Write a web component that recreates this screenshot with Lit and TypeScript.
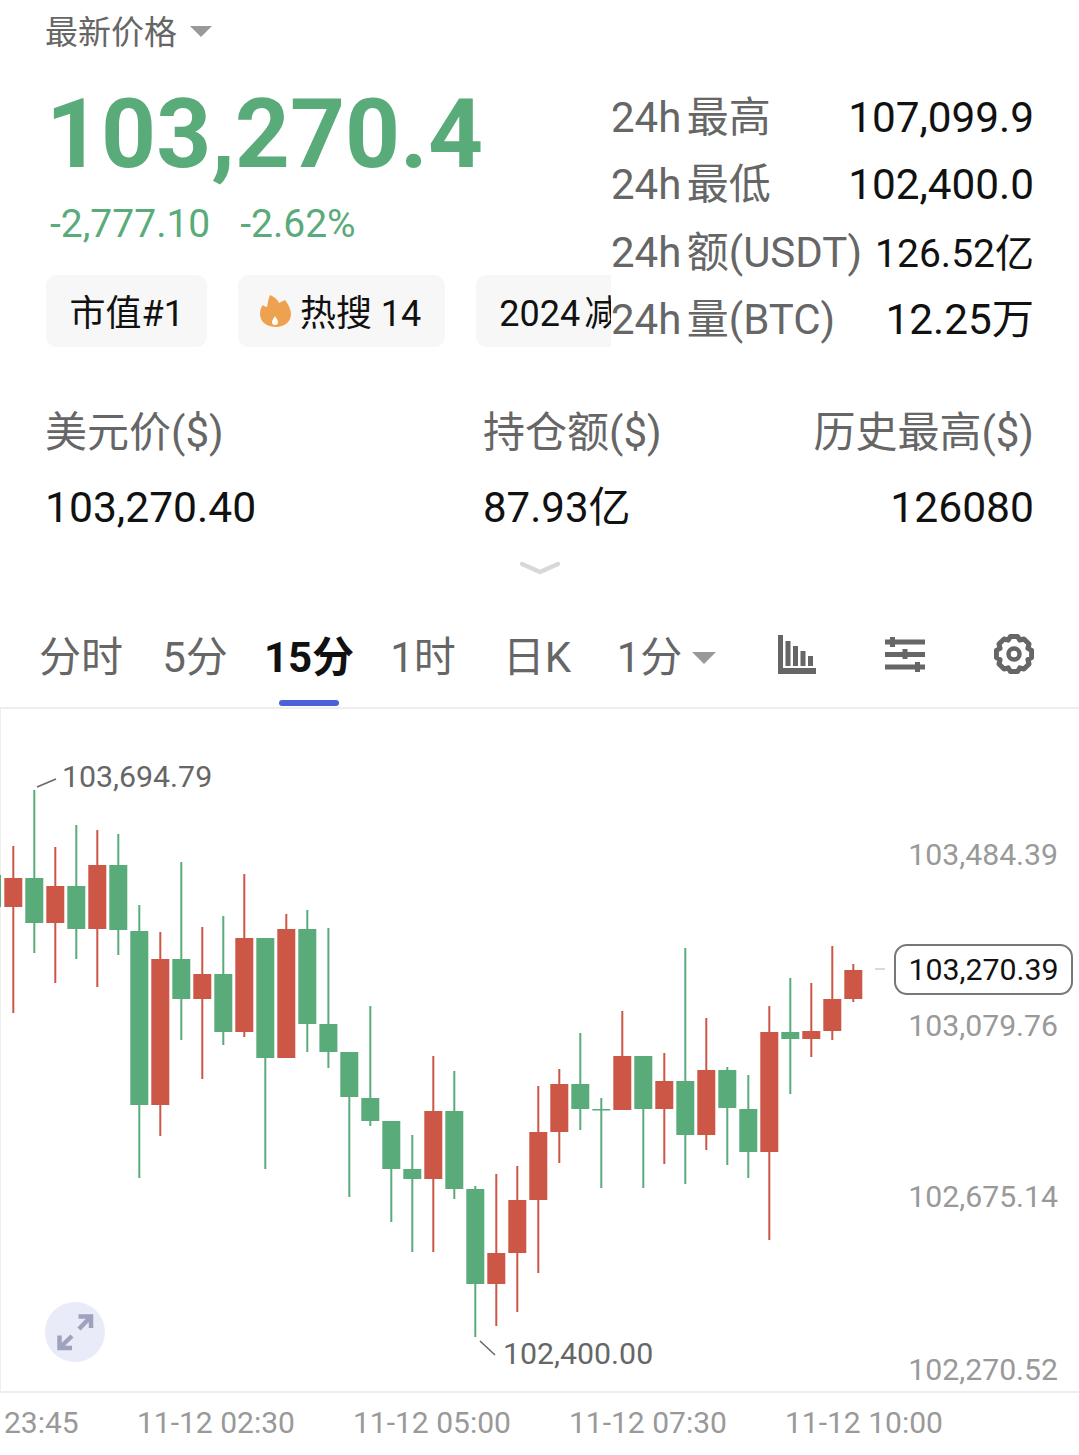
import { LitElement, html, svg, css } from 'lit';
import { customElement } from 'lit/decorators.js';

// x, wick top, wick bottom, body top, body bottom, up(red)
type Candle = [number, number, number, number, number, boolean];

const CANDLES: Candle[] = [
  [-8, 875, 907, 875, 907, false],
  [13.3, 846, 1013, 878, 907, true],
  [34.3, 790, 953, 878, 923, false],
  [55.3, 847, 983, 886, 923, true],
  [76.3, 825, 959, 886, 929, false],
  [97.3, 830, 987, 865, 929, true],
  [118.3, 834, 955, 865, 930, false],
  [139.3, 905, 1178, 931, 1105, false],
  [160.3, 932, 1136, 959, 1105, true],
  [181.3, 862, 1040, 959, 999, false],
  [202.3, 927, 1079, 974, 999, true],
  [223.3, 916, 1045, 974, 1032, false],
  [244.3, 874, 1037, 938, 1032, true],
  [265.3, 938, 1169, 938, 1058, false],
  [286.3, 914, 1058, 929, 1058, true],
  [307.3, 910, 1052, 929, 1024, false],
  [328.4, 928, 1068, 1024, 1052, false],
  [349.3, 1052, 1197, 1052, 1097, false],
  [370.3, 1006, 1126, 1098, 1121, false],
  [391.3, 1121, 1222, 1121, 1169, false],
  [412.3, 1135, 1252, 1169, 1179, false],
  [433.3, 1056, 1252, 1111, 1179, true],
  [454.3, 1071, 1199, 1111, 1189, false],
  [475.3, 1186, 1337, 1189, 1284, false],
  [496.3, 1174, 1326, 1253, 1284, true],
  [517.3, 1166, 1312, 1200, 1253, true],
  [538.3, 1086, 1273, 1132, 1200, true],
  [559.3, 1069, 1163, 1084, 1132, true],
  [580.3, 1033, 1130, 1084, 1109, false],
  [601.3, 1098, 1188, 1109, 1110, false],
  [622.3, 1011, 1110, 1056, 1110, true],
  [643.3, 1056, 1188, 1056, 1109, false],
  [664.3, 1053, 1164, 1081, 1109, true],
  [685.3, 948, 1184, 1081, 1135, false],
  [706.3, 1018, 1150, 1070, 1135, true],
  [727.3, 1067, 1165, 1070, 1108, false],
  [748.3, 1075, 1178, 1109, 1152, false],
  [769.3, 1006, 1240, 1032, 1152, true],
  [790.3, 978, 1094, 1032, 1039, false],
  [811.3, 983, 1057, 1031, 1039, true],
  [832.3, 946, 1040, 999, 1031, true],
  [853.3, 964, 1002, 970, 999, true],
];

const CHART_TOP = 709;

const AXIS = [
  { text: '103,484.39', y: 855 },
  { text: '103,079.76', y: 1026 },
  { text: '102,675.14', y: 1197 },
  { text: '102,270.52', y: 1370 },
];

// eight rounded lobes round the centre, two points on each lobe and one in the notch
function gearPath(cx: number, cy: number, outer: number, inner: number) {
  const pts: string[] = [];
  for (let i = 0; i < 8; i++) {
    const a = (i * Math.PI) / 4 - Math.PI / 2;
    for (const [da, r] of [[-0.2, outer], [0.2, outer], [Math.PI / 8, inner]]) {
      pts.push(`${(cx + r * Math.cos(a + da)).toFixed(1)} ${(cy + r * Math.sin(a + da)).toFixed(1)}`);
    }
  }
  return `M${pts.join('L')}z`;
}

@customElement('app-root')
export class AppRoot extends LitElement {
  static styles = css`
    :host {
      display: block;
      width: 1079px;
      height: 1455px;
      overflow: hidden;
      background: #fff;
      font-family: Roboto, "Noto Sans CJK SC", sans-serif;
      color: #111;
    }

    .top {
      display: flex;
      height: 375px;
    }

    .left {
      flex: none;
      width: 611px;
      padding-left: 45px;
      box-sizing: border-box;
      overflow: hidden;
    }

    .title {
      display: flex;
      align-items: center;
      height: 62px;
      margin-top: -1px;
      font-size: 33px;
      color: #666;
    }

    .tri {
      width: 0;
      height: 0;
      border-left: 11px solid transparent;
      border-right: 11px solid transparent;
      border-top: 11px solid #999;
    }

    .title .tri {
      margin-left: 13px;
      margin-top: 3px;
    }

    .price {
      margin: 25px 0 0 1px;
      font-size: 96px;
      line-height: 96px;
      font-weight: 700;
      color: #5aab7a;
      white-space: nowrap;
    }

    .change {
      display: flex;
      gap: 30px;
      margin: 17px 0 0 5px;
      font-size: 39px;
      line-height: 50px;
      color: #5aab7a;
    }

    .chips {
      display: flex;
      gap: 31px;
      margin: 26px 0 0 1px;
      width: 700px;
    }

    .chip {
      display: flex;
      align-items: center;
      gap: 8px;
      box-sizing: border-box;
      height: 72px;
      padding: 6px 23.5px 0 23.5px;
      border-radius: 11px;
      background: #f7f7f7;
      font-size: 36px;
      line-height: 66px;
      white-space: nowrap;
      flex: none;
    }

    .chip.fire {
      padding: 6px 23.5px 0 21.5px;
    }

    .chip.fire svg {
      margin-top: -6px;
    }

    .chip.halving {
      word-spacing: -5px;
    }

    .right {
      flex: 1;
      padding: 84px 45px 0 0;
    }

    .stat {
      display: flex;
      justify-content: space-between;
      align-items: baseline;
      height: 67.4px;
      line-height: 67.4px;
      font-size: 42px;
      white-space: nowrap;
    }

    .stat span:first-child {
      color: #666;
      word-spacing: -5px;
    }

    .stat span:last-child {
      font-size: 42.3px;
    }

    .stat span.fit:last-child {
      font-size: 39px;
    }

    .metrics {
      display: grid;
      grid-template-columns: 438px 1fr auto;
      padding: 20px 45px 0;
      height: 128px;
      font-size: 42px;
      line-height: 75px;
      white-space: nowrap;
    }

    .metrics .label {
      color: #666;
    }

    .metrics .end {
      text-align: right;
    }

    .metrics .num {
      font-size: 42.6px;
    }

    .more {
      display: flex;
      justify-content: center;
      align-items: flex-start;
      height: 46px;
      padding-top: 38px;
    }

    .tabs {
      display: flex;
      align-items: center;
      height: 100px;
      padding-left: 24px;
      border-bottom: 2px solid #eee;
    }

    .tab {
      position: relative;
      width: 114px;
      flex: none;
      padding-top: 2px;
      line-height: 98px;
      text-align: center;
      font-size: 42px;
      color: #666;
      white-space: nowrap;
    }

    .tab.active {
      color: #111;
      font-weight: 700;
    }

    .tab.active::after {
      content: "";
      position: absolute;
      left: 27px;
      bottom: 1px;
      width: 60px;
      height: 6px;
      border-radius: 3px;
      background: #4a62d8;
    }

    .tab.drop {
      box-sizing: border-box;
      padding-right: 3px;
    }

    .tab .tri {
      position: absolute;
      left: 98px;
      top: 45px;
      border-left-width: 12px;
      border-right-width: 12px;
      border-top-width: 12px;
    }

    .tools {
      display: flex;
      margin: 0 0 6px 35px;
    }

    .tool {
      display: flex;
      justify-content: center;
      align-items: center;
      box-sizing: border-box;
      width: 108px;
    }

    .tool.cog {
      padding-left: 2px;
    }

    .chart {
      position: relative;
      height: 682px;
      border-left: 1px solid #eee;
      border-bottom: 2px solid #eee;
    }

    .chart > svg {
      position: absolute;
      left: -1px;
      top: 0;
    }

    .axis {
      position: absolute;
      right: 21px;
      font-size: 30.2px;
      line-height: 36px;
      color: #999;
      transform: translateY(-50%);
    }

    .extreme {
      position: absolute;
      font-size: 30.3px;
      line-height: 36px;
      color: #666;
      transform: translateY(-50%);
    }

    .last {
      position: absolute;
      left: 893px;
      top: 235px;
      width: 179px;
      height: 51px;
      box-sizing: border-box;
      border: 2px solid #777;
      border-radius: 13px;
      background: #fff;
      font-size: 30.3px;
      line-height: 47px;
      text-align: center;
      color: #111;
    }

    .expand {
      position: absolute;
      left: 44px;
      top: 593px;
      width: 60px;
      height: 60px;
      border-radius: 50%;
      background: #e9ebf9;
    }

    .times {
      display: flex;
      padding-left: 4px;
      font-size: 30px;
      line-height: 60px;
      color: #999;
      white-space: nowrap;
    }

    .times span {
      width: 216px;
      flex: none;
    }

    .times span:first-child {
      width: 133px;
    }
  `;

  private renderCandles() {
    return CANDLES.map(([x, top, bottom, bodyTop, bodyBottom, up]) => {
      const color = up ? '#cc5746' : '#5aab7a';
      return svg`
        <rect x=${x - 1} y=${top} width="2" height=${bottom - top} fill=${color}></rect>
        <rect x=${x - 9} y=${bodyTop} width="18" height=${Math.max(bodyBottom - bodyTop, 1.5)} fill=${color}></rect>
      `;
    });
  }

  private flame() {
    return html`<svg width="32" height="34" viewBox="0 0 32 34">
      <path d="M10 1C15 3 18 6 19 9C21 8 23 7 25 6C28 10 31 15 31 20C31 28 24 33 16 33C7 33 0 28 0 20C0 16 1 13 3 11C4 12 6 13 7 13C8 9 8 5 10 1z" fill="#eea24f"></path>
      <path d="M15 22C16 24 18 26 18 28C18 30 17 31 15 31C13 31 12 30 12 28C12 26 14 24 15 22z" fill="#fff"></path>
    </svg>`;
  }

  private bars() {
    return html`<svg width="38" height="39" viewBox="0 0 38 39" fill="#666">
      <path d="M0 0h5v33h33v6H0z"></path>
      <rect x="7.5" y="6" width="5" height="25"></rect>
      <rect x="15" y="11" width="5" height="20"></rect>
      <rect x="22.5" y="16" width="5" height="15"></rect>
      <rect x="30" y="21" width="5" height="10"></rect>
    </svg>`;
  }

  private sliders() {
    return html`<svg width="40" height="36" viewBox="0 0 40 36" fill="#666">
      <rect x="0" y="3.5" width="40" height="5"></rect>
      <rect x="0" y="16" width="40" height="5"></rect>
      <rect x="0" y="28.5" width="40" height="5"></rect>
      <rect x="5" y="1" width="5" height="10"></rect>
      <rect x="17.5" y="13" width="5" height="10"></rect>
      <rect x="30" y="26" width="5" height="10"></rect>
    </svg>`;
  }

  private gear() {
    return html`<svg width="40" height="42" viewBox="0 0 40 42" fill="none" stroke="#666">
      <path stroke-width="5" stroke-linejoin="round" d=${gearPath(20, 21, 18, 15)}></path>
      <circle cx="20" cy="21" r="5.5" stroke-width="4.5"></circle>
    </svg>`;
  }

  render() {
    return html`
      <div class="top">
        <div class="left">
          <div class="title">最新价格<i class="tri"></i></div>
          <div class="price">103,270.4</div>
          <div class="change"><span>-2,777.10</span><span>-2.62%</span></div>
          <div class="chips">
            <div class="chip">市值#1</div>
            <div class="chip fire">${this.flame()}热搜 14</div>
            <div class="chip halving">2024 减半</div>
          </div>
        </div>
        <div class="right">
          <div class="stat"><span>24h 最高</span><span>107,099.9</span></div>
          <div class="stat"><span>24h 最低</span><span>102,400.0</span></div>
          <div class="stat"><span>24h 额(USDT)</span><span class="fit">126.52亿</span></div>
          <div class="stat"><span>24h 量(BTC)</span><span>12.25万</span></div>
        </div>
      </div>

      <div class="metrics">
        <div class="label">美元价($)</div>
        <div class="label">持仓额($)</div>
        <div class="label end">历史最高($)</div>
        <div class="num">103,270.40</div>
        <div>87.93亿</div>
        <div class="num end">126080</div>
      </div>

      <div class="more">
        <svg width="42" height="16" viewBox="0 0 42 16" fill="none">
          <path d="M3 3l18 8 18-8" stroke="#d8d8d8" stroke-width="4.5" stroke-linecap="round" stroke-linejoin="round"></path>
        </svg>
      </div>

      <div class="tabs">
        <div class="tab">分时</div>
        <div class="tab">5分</div>
        <div class="tab active">15分</div>
        <div class="tab">1时</div>
        <div class="tab">日K</div>
        <div class="tab drop">1分<i class="tri"></i></div>
        <div class="tools">
          <div class="tool">${this.bars()}</div>
          <div class="tool">${this.sliders()}</div>
          <div class="tool cog">${this.gear()}</div>
        </div>
      </div>

      <div class="chart">
        <svg width="1079" height="682" viewBox="0 ${CHART_TOP} 1079 682">
          ${this.renderCandles()}
          <path d="M37 787l19-8" stroke="#666" stroke-width="1.5"></path>
          <path d="M480 1341l15 14" stroke="#666" stroke-width="1.5"></path>
          <path d="M875 969h10" stroke="#ccc" stroke-width="1.5"></path>
        </svg>
        ${AXIS.map(a => html`<div class="axis" style="top:${a.y - CHART_TOP}px">${a.text}</div>`)}
        <div class="extreme" style="left:61px;top:${777 - CHART_TOP}px">103,694.79</div>
        <div class="extreme" style="left:502px;top:${1354 - CHART_TOP}px">102,400.00</div>
        <div class="last">103,270.39</div>
        <div class="expand">
          <svg width="60" height="60" viewBox="0 0 60 60" fill="none" stroke="#9ea3bd" stroke-width="4.5">
            <path d="M33.5 14.5H46V26M46 14.5L34 27M14.5 33.5V46H27M14.5 46L27 34"></path>
          </svg>
        </div>
      </div>

      <div class="times">
        <span>23:45</span>
        <span>11-12 02:30</span>
        <span>11-12 05:00</span>
        <span>11-12 07:30</span>
        <span>11-12 10:00</span>
      </div>
    `;
  }
}
